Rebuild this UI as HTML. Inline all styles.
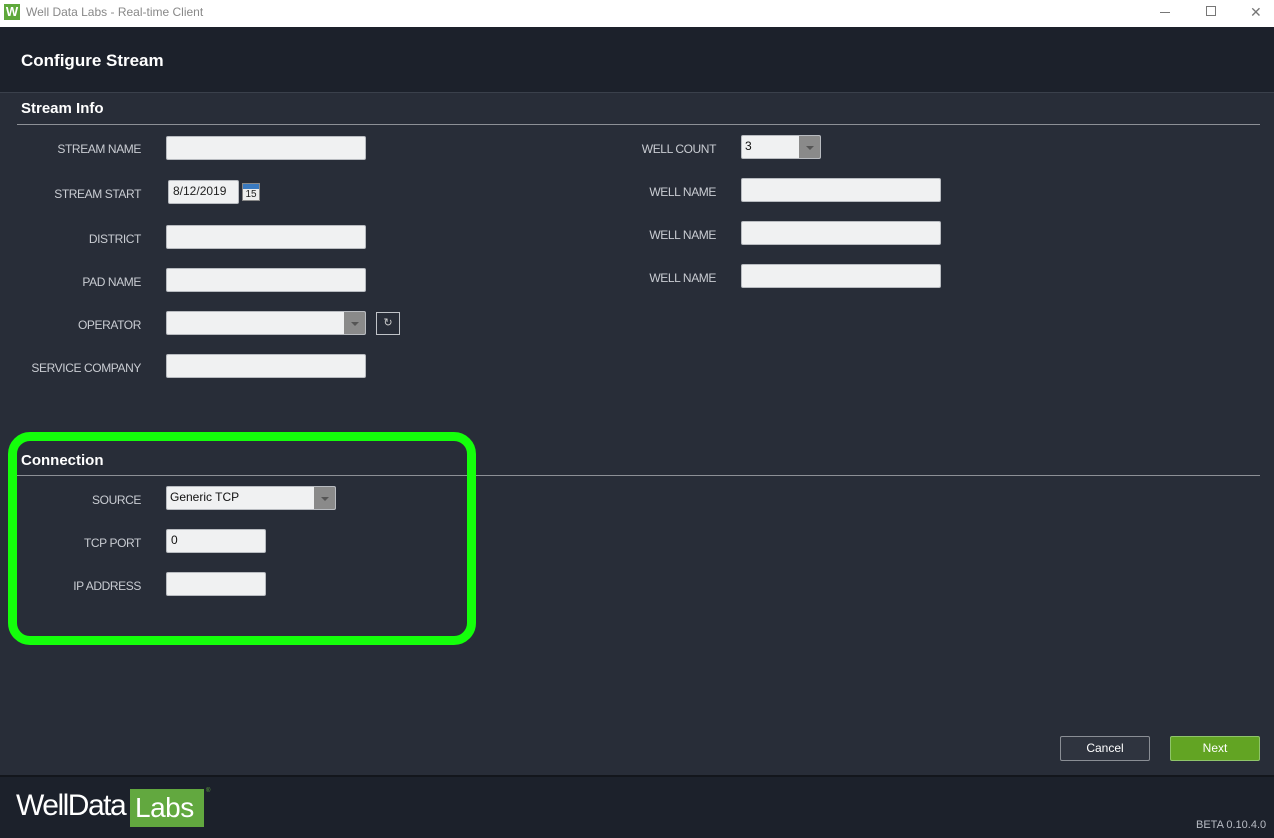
<!DOCTYPE html>
<html><head><meta charset="utf-8"><style>
*{box-sizing:border-box;margin:0;padding:0}
body{width:1274px;height:838px;overflow:hidden;background:#282d38;font-family:"Liberation Sans",sans-serif;position:relative}
.abs{position:absolute}
.tb{left:0;top:0;width:1274px;height:27px;background:#fff}
.hdr{left:0;top:27px;width:1274px;height:66px;background:#1c212b;border-bottom:1px solid #3a404b}
.lbl{color:#c9ccd2;font-size:12px;text-align:right;width:160px;letter-spacing:-0.4px}
.in{background:#f0f1f2;border:1px solid #b8bbc0;border-radius:2px;height:24px;font-size:12px;color:#111;padding:3px 4px}
.dd{background:#f0f1f2;border:1px solid #b8bbc0;border-radius:2px;height:24px;font-size:12px;color:#111;padding:3px 3px;overflow:hidden}
.dd .ar{position:absolute;right:0;top:0;width:21px;height:100%;background:#8a8a8a}
.dd .ar:after{content:"";position:absolute;left:7px;top:10px;border-left:4px solid transparent;border-right:4px solid transparent;border-top:4px solid #555}
.sec{color:#fff;font-size:15px;font-weight:bold}
.line{height:1px;background:#8d9096}
</style></head><body>
<div class="abs tb"></div>
<div class="abs" style="left:4px;top:4px;width:16px;height:16px;background:#5fa83b;color:#fff;font-weight:bold;font-size:13px;text-align:center;line-height:16px">W</div>
<div class="abs" style="left:26px;top:5px;font-size:12px;color:#888">Well Data Labs - Real-time Client</div>
<div class="abs" style="left:1160px;top:12px;width:10px;height:1px;background:#777"></div>
<div class="abs" style="left:1206px;top:6px;width:10px;height:10px;border:1px solid #777"></div>
<div class="abs" style="left:1250px;top:4px;font-size:14px;color:#777">✕</div>
<div class="abs hdr"></div>
<div class="abs" style="left:21px;top:51px;color:#fff;font-size:17px;font-weight:bold">Configure Stream</div>

<div class="abs sec" style="left:21px;top:100px">Stream Info</div>
<div class="abs line" style="left:17px;top:124px;width:1243px"></div>

<div class="abs lbl" style="left:-19px;top:142px">STREAM NAME</div>
<div class="abs in" style="left:166px;top:136px;width:200px"></div>
<div class="abs lbl" style="left:-19px;top:187px">STREAM START</div>
<div class="abs in" style="left:168px;top:180px;width:71px;padding:3px 4px;color:#222">8/12/2019</div>
<div class="abs" style="left:242px;top:183px;width:18px;height:18px;background:#eee;border:1px solid #888">
<div style="height:5px;background:#3a7ac0"></div><div style="font-size:10px;text-align:center;line-height:11px;color:#222">15</div></div>
<div class="abs lbl" style="left:-19px;top:232px">DISTRICT</div>
<div class="abs in" style="left:166px;top:225px;width:200px"></div>
<div class="abs lbl" style="left:-19px;top:275px">PAD NAME</div>
<div class="abs in" style="left:166px;top:268px;width:200px"></div>
<div class="abs lbl" style="left:-19px;top:318px">OPERATOR</div>
<div class="abs dd" style="left:166px;top:311px;width:200px"><div class="ar"></div></div>
<div class="abs" style="left:376px;top:312px;width:24px;height:23px;border:1px solid #c0c3c8;color:#ccc;font-size:11px;text-align:center;line-height:21px">↻</div>
<div class="abs lbl" style="left:-19px;top:361px">SERVICE COMPANY</div>
<div class="abs in" style="left:166px;top:354px;width:200px"></div>

<div class="abs lbl" style="left:556px;top:142px">WELL COUNT</div>
<div class="abs dd" style="left:741px;top:135px;width:80px">3<div class="ar"></div></div>
<div class="abs lbl" style="left:556px;top:185px">WELL NAME</div>
<div class="abs in" style="left:741px;top:178px;width:200px"></div>
<div class="abs lbl" style="left:556px;top:228px">WELL NAME</div>
<div class="abs in" style="left:741px;top:221px;width:200px"></div>
<div class="abs lbl" style="left:556px;top:271px">WELL NAME</div>
<div class="abs in" style="left:741px;top:264px;width:200px"></div>

<div class="abs sec" style="left:21px;top:452px">Connection</div>
<div class="abs line" style="left:17px;top:475px;width:1243px"></div>
<div class="abs lbl" style="left:-19px;top:493px">SOURCE</div>
<div class="abs dd" style="left:166px;top:486px;width:170px">Generic TCP<div class="ar"></div></div>
<div class="abs lbl" style="left:-19px;top:536px">TCP PORT</div>
<div class="abs in" style="left:166px;top:529px;width:100px">0</div>
<div class="abs lbl" style="left:-19px;top:579px">IP ADDRESS</div>
<div class="abs in" style="left:166px;top:572px;width:100px"></div>
<div class="abs" style="left:8px;top:432px;width:468px;height:213px;border:9px solid #14ff0b;border-radius:22px"></div>

<div class="abs" style="left:1060px;top:736px;width:90px;height:25px;border:1px solid #8a8e95;border-radius:2px;background:#2f343f;color:#fff;font-size:12px;text-align:center;line-height:23px">Cancel</div>
<div class="abs" style="left:1170px;top:736px;width:90px;height:25px;border:1px solid #8fc46a;border-radius:2px;background:#62a423;color:#fff;font-size:12px;text-align:center;line-height:23px">Next</div>

<div class="abs" style="left:0;top:775px;width:1274px;height:63px;background:#1c212b;border-top:2px solid #13161c"></div>
<div class="abs" style="left:16px;top:789px;color:#fff;font-size:30px;letter-spacing:-1.5px">WellData</div>
<div class="abs" style="left:130px;top:789px;width:74px;height:38px;background:#62a83f;color:#fff;font-size:28px;padding-left:5px;line-height:38px;letter-spacing:-0.5px">Labs</div>
<div class="abs" style="left:206px;top:788px;color:#62a83f;font-size:6px">®</div>
<div class="abs" style="left:1196px;top:819px;color:#b8bcc4;font-size:11px">BETA 0.10.4.0</div>
</body></html>
